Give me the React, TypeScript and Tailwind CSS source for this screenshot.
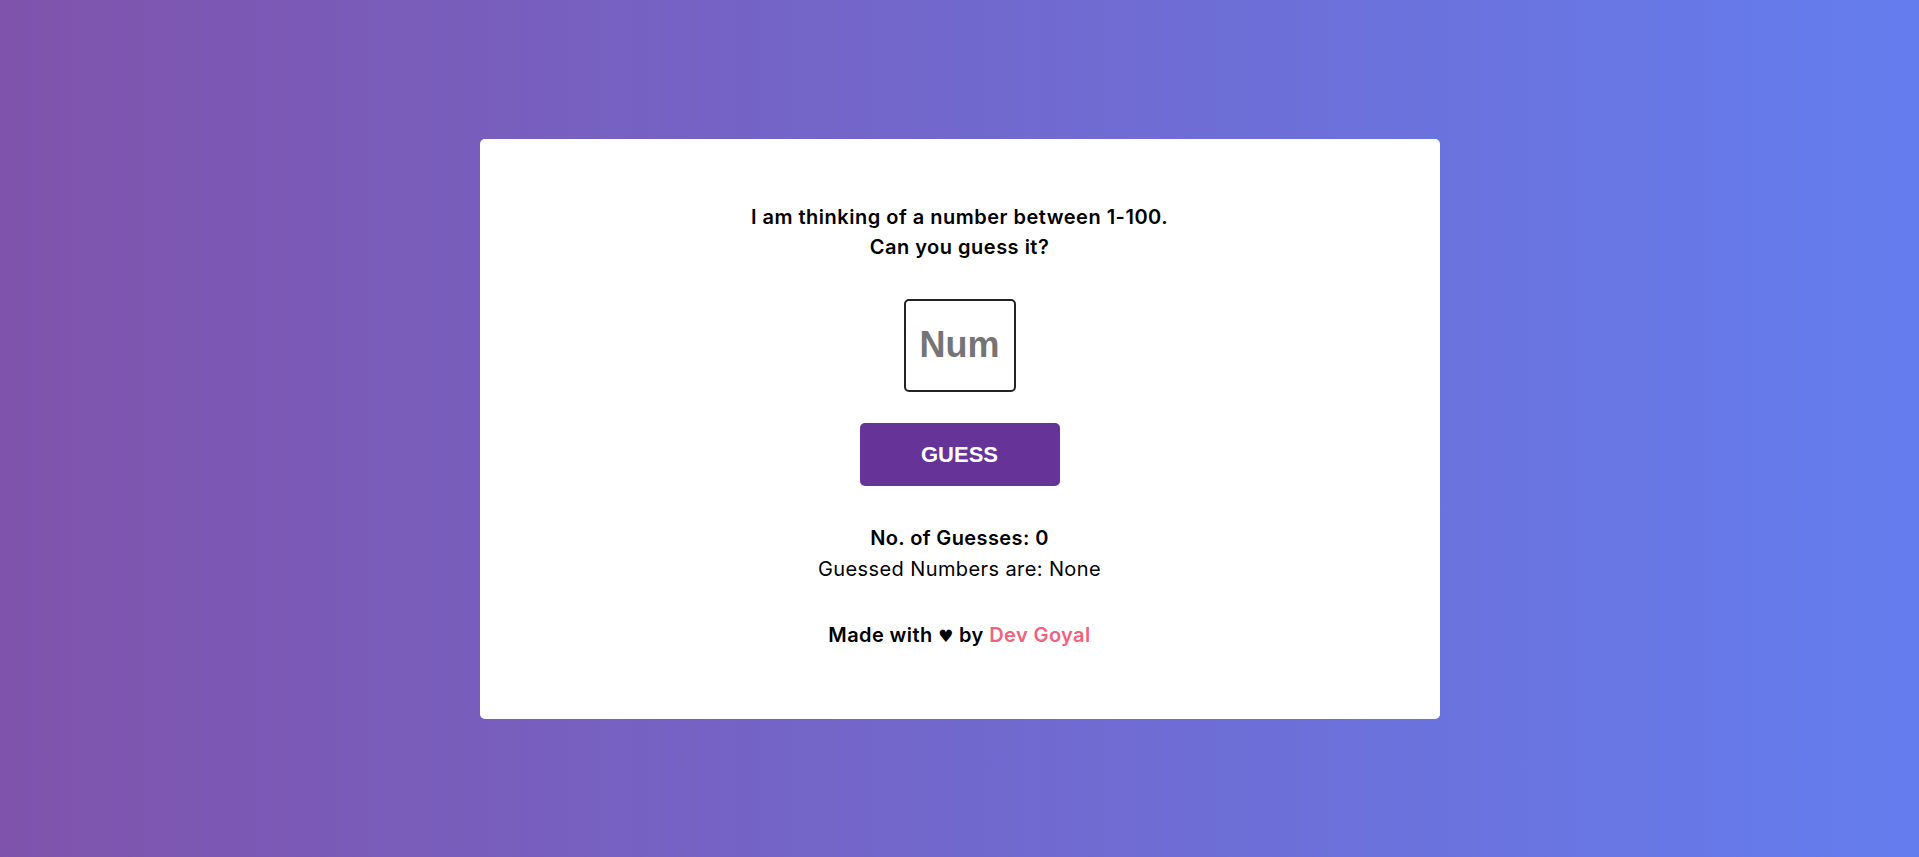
import React from "react";

export default function App() {
  return (
    <div className="w-full h-[857px] flex items-center justify-center bg-[linear-gradient(to_right,#7f53ac,#647dee)] font-['Inter',sans-serif]">
      <div className="w-[960px] h-[580px] bg-white rounded-[5px] flex flex-col items-center pt-[63px] text-black">
        <div className="text-[20px] leading-[30px] font-semibold text-center tracking-[0.5px]">
          <p>I am thinking of a number between 1-100.</p>
          <p>Can you guess it?</p>
        </div>
        <input
          type="text"
          placeholder="Num"
          className="mt-[37px] w-[112px] h-[93px] border-2 border-[#222] rounded-[5px] text-center text-[36px] font-bold font-['Liberation_Sans',Arial,sans-serif] placeholder:text-[#757575] outline-none"
        />
        <button className="mt-[31px] w-[200px] h-[63px] bg-[#663399] rounded-[5px] text-white text-[22px] font-bold font-['Liberation_Sans',Arial,sans-serif]">
          GUESS
        </button>
        <div className="mt-[37px] text-[20px] leading-[31px] text-center tracking-[0.4px]">
          <p className="font-semibold">No. of Guesses: 0</p>
          <p>Guessed Numbers are: None</p>
        </div>
        <p className="mt-[35px] text-[20px] leading-[30px] font-semibold tracking-[0.4px]">
          Made with <span className="font-['DejaVu_Sans',sans-serif] text-[17px]">♥</span> by{" "}
          <span className="text-[#f2627c]">Dev Goyal</span>
        </p>
      </div>
    </div>
  );
}
